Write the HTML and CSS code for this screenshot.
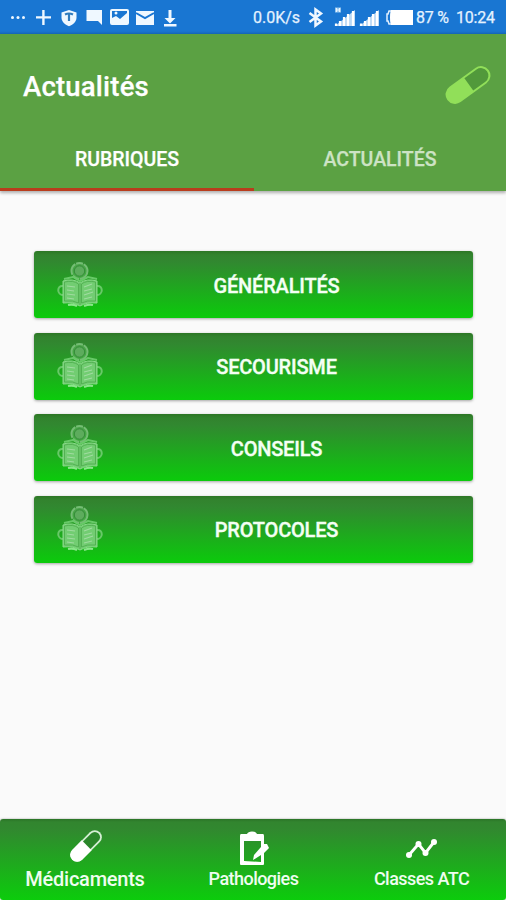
FILE: index.html
```html
<!DOCTYPE html>
<html lang="fr">
<head>
<meta charset="utf-8">
<meta name="viewport" content="width=device-width, initial-scale=1">
<title>Actualités</title>
<link rel="stylesheet" href="styles.css">
</head>
<body>
<svg class="defs" aria-hidden="true">
  <symbol id="reader" viewBox="0 0 48 46">
    <circle cx="23.500" cy="9" r="8" fill="#78ce78" fill-opacity=".35" stroke="#75bd75" stroke-width="2" stroke-dasharray="12 1 7 1"/>
    <circle cx="23.500" cy="9" r="5.200" fill="#5dac5d" stroke="#348d38" stroke-width="1"/>
    <path d="M8 17 17 15l7 4 8-4 9 2M7 24c-6-1-7 9 1 9M41 24c6-1 7 9-1 9" fill="none" stroke="#68c968" stroke-width="2"/>
    <path d="M7 19q10-3 17 2 7-5 17-2v22q-10-1-17 3-7-4-17-3z" fill="#72cd72" stroke="#8bd98b" stroke-width="1"/>
    <path d="M8.500 20q9-2 14 2v19q-5-3-14-2zM39.500 20q-9-2-14 2v19q5-3 14-2zM24 21v22" fill="none" stroke="#4ba94b" stroke-width=".8"/>
    <path d="m11 24 8 1m-8 3 7 1m-7 3 8 1m-8 3 7 1m10-12 8-3m-8 7 8-2m-8 6 9-3m-9 7 8-2" fill="none" stroke="#a0dba0" stroke-width="1.200"/>
    <path d="M12 43q5-1 9 1M28 44q5-2 9-1" fill="none" stroke="#8be58b" stroke-width="2"/>
  </symbol>
</svg>
<div class="screen">
  <div class="status">
    <svg class="notifications" viewBox="0 0 190 34">
      <g fill="#eff8ff">
        <circle cx="12.500" cy="17.500" r="1.500"/><circle cx="18" cy="17.500" r="1.500"/><circle cx="23.500" cy="17.500" r="1.500"/>
        <path d="M42.200 10h2.400v6.200H51v2.400h-6.400V25h-2.400v-6.400H36v-2.400h6.200z"/>
        <path d="m69 10 7.500 2.500v5c0 4-3 7-7.500 8.800-4.500-1.800-7.500-4.800-7.500-8.800v-5z"/>
        <path d="M86.500 10h15.500v15l-4-4H86.500z"/>
        <path fill-rule="evenodd" d="M112 9h15q2 0 2 2v12q0 2-2 2h-15q-2 0-2-2V11q0-2 2-2zm0 2v7l4-2 4 3 7-6v-2z"/>
        <path d="M136 11h18v14h-18z"/>
        <path d="M168.500 10h3v8h4l-5.500 5.500-5.500-5.500h4zM164 24h12.500v2.500H164z"/>
      </g>
      <path d="M65 14.500q4-2 8 0M69 14v7" fill="none" stroke="#317cbd" stroke-width="2.200"/>
      <path d="m136 13 9 5 9-5" fill="none" stroke="#1875d2" stroke-width="2"/>
      <circle cx="116" cy="13" r="1.500" fill="#eff8ff"/>
    </svg>
    <span class="speed">0.0K/s</span>
    <svg class="signals" viewBox="300 0 116 34">
      <path d="m309.500 13 11.500 8.500-5.500 4V9.500l5.500 4-11.500 8.500" fill="none" stroke="#f1f8ff" stroke-width="2.500"/>
      <path d="M335 7.500h6v5h-6z" fill="#96c6ef"/><path d="M336.500 8v4m3-4v4m-3-2h3" stroke="#e7f4ff" stroke-width="1"/>
      <path d="m335 26 20-16v16zM359.500 26 379 10v16z" fill="#bad9f5"/>
      <path d="M336 23.500V26m4-5v5m4-9v9m4-12v12m5-15v15m8-2.500V26m4-5v5m4-9v9m4-12v12m4-15v15" stroke="#fff" stroke-width="2.200"/>
      <path d="M391 10h22v15h-22q-1-2-1-7.500t1-7.500z" fill="#fff"/>
      <path d="M391 11h-2l-1 3h-1v7h1l1 3h2" fill="none" stroke="#e2f1ff" stroke-width="1.500"/>
    </svg>
    <span class="battery">87 %</span>
    <span class="clock">10:24</span>
  </div>
  <header class="header">
    <div class="titlebar">
      <h1>Actualités</h1>
      <svg class="title-pill" viewBox="0 0 48 40">
        <g transform="translate(24 20) rotate(-36)"><rect x="-25.500" y="-9.500" width="51" height="19" rx="9.500" fill="#91df59"/><path d="M1-7.500h15a7.500 7.500 0 0 1 0 15H1z" fill="#51993b"/></g>
      </svg>
    </div>
    <nav class="tabs">
      <span class="tab active">RUBRIQUES</span>
      <span class="tab">ACTUALITÉS</span>
    </nav>
  </header>
  <main class="list">
    <button class="item"><svg class="reader"><use href="#reader"/></svg><span>GÉNÉRALITÉS</span></button>
    <button class="item"><svg class="reader"><use href="#reader"/></svg><span>SECOURISME</span></button>
    <button class="item"><svg class="reader"><use href="#reader"/></svg><span>CONSEILS</span></button>
    <button class="item"><svg class="reader"><use href="#reader"/></svg><span>PROTOCOLES</span></button>
  </main>
  <nav class="bottom">
    <div class="dest selected">
      <svg viewBox="0 0 36 36"><g transform="translate(19 15) rotate(-45)"><rect x="-19.500" y="-7" width="39" height="14" rx="7" fill="#d6efd6"/><path d="M1-7h-13.500a7 7 0 0 0 0 14H1z" fill="#fff"/><path d="M1-5.200h11.500a5.200 5.200 0 0 1 0 10.400H1z" fill="#2a862a"/></g></svg>
      <span>Médicaments</span>
    </div>
    <div class="dest">
      <svg viewBox="0 0 36 36"><path fill-rule="evenodd" fill="#fff" d="M5 3h6q1-2.500 5-2.500t5 2.500h6q1 0 1 2v8l3 0 2 4-5 5v11q0 1-1 1H5q-1 0-1-1V5q0-2 1-2zm3 7v20l17 1v-7l-8 5 1-5 7-8v-6z"/></svg>
      <span>Pathologies</span>
    </div>
    <div class="dest">
      <svg viewBox="0 0 36 36"><path d="M5 24 14.500 13l7 9L30 11" fill="none" stroke="#fff" stroke-width="2.900"/><g fill="#fff"><circle cx="5" cy="24" r="3"/><circle cx="14.500" cy="13" r="3"/><circle cx="21.500" cy="22" r="3"/><circle cx="30" cy="11" r="3"/></g></svg>
      <span>Classes ATC</span>
    </div>
  </nav>
</div>
</body>
</html>
```

FILE: styles.css
```css
* { box-sizing: border-box; }
body { margin: 0; font-family: Roboto, "Liberation Sans", sans-serif; background: #fafafa; }
.defs { position: absolute; width: 0; height: 0; }
.screen { display: flex; flex-direction: column; width: 506px; height: 900px; overflow: hidden; }
.status { display: flex; align-items: center; flex: none; height: 34px; color: #e4f2ff; background: linear-gradient(#1976d2 31px, #1668b8); font-size: 16px; line-height: 34px; white-space: nowrap; -webkit-text-stroke: .25px currentColor; }
.notifications { width: 190px; height: 34px; }
.speed { width: 47px; margin-left: 63px; letter-spacing: 0; padding-top: 2px; }
.signals { width: 116px; height: 34px; }
.battery { width: 40px; letter-spacing: -.2px; padding-top: 2px; }
.clock { padding-top: 2px; letter-spacing: -.2px; }
.header { flex: none; height: 157px; background: #5ba143; box-shadow: 0 2px 3px rgba(0, 0, 0, .3); }
.titlebar { display: flex; align-items: center; justify-content: space-between; height: 101px; padding: 0 14px 0 23px; }
h1 { margin: 0; color: #fff; font-size: 27.500px; line-height: 34px; font-weight: 500; letter-spacing: .2px; padding-top: 4px; -webkit-text-stroke: .25px currentColor; }
.title-pill { width: 48px; height: 40px; }
.tabs { display: grid; grid-template-columns: 254px 252px; height: 56px; }
.tab { display: flex; align-items: center; justify-content: center; color: #cde3c5; font-size: 19.500px; font-weight: 500; padding-bottom: 4px; border-bottom: 3px solid transparent; -webkit-text-stroke: .25px currentColor; }
.tab.active { color: #fff; border-bottom-color: #b93d1d; }
.list { display: flex; flex: 1; flex-direction: column; gap: 14.500px; padding: 60px 33px 0 34px; }
.item { display: flex; align-items: center; flex: none; height: 67px; padding: 0 30px 0 22px; border: 0; border-radius: 3px; font: 500 20px Roboto, "Liberation Sans", sans-serif; letter-spacing: -.2px; color: #f4fff4; background: linear-gradient(#2d7625 0, #32832e 4px, #318830 11px, #0bcb0b); box-shadow: 0 1px 3px rgba(0, 0, 0, .35); -webkit-text-stroke: .35px currentColor; }
.item span { flex: 1; text-align: center; padding: 2px 0 0 6px; }
.reader { width: 48px; height: 46px; flex: none; }
.bottom { display: grid; grid-template-columns: 170px 167px 169px; flex: none; height: 81px; border-radius: 3px; color: #effdf0; background: linear-gradient(#2b7427 0, #32852f 3px, #31882f 10px, #0ccc0c); box-shadow: 0 0 2px rgba(0, 0, 0, .4); }
.dest { display: flex; flex-direction: column; align-items: center; padding-top: 12px; font-size: 18px; line-height: 24px; font-weight: 500; letter-spacing: -.55px; }
.dest svg { width: 36px; height: 36px; flex: none; overflow: visible; }
.dest.selected { font-size: 20px; letter-spacing: -.25px; }
```
